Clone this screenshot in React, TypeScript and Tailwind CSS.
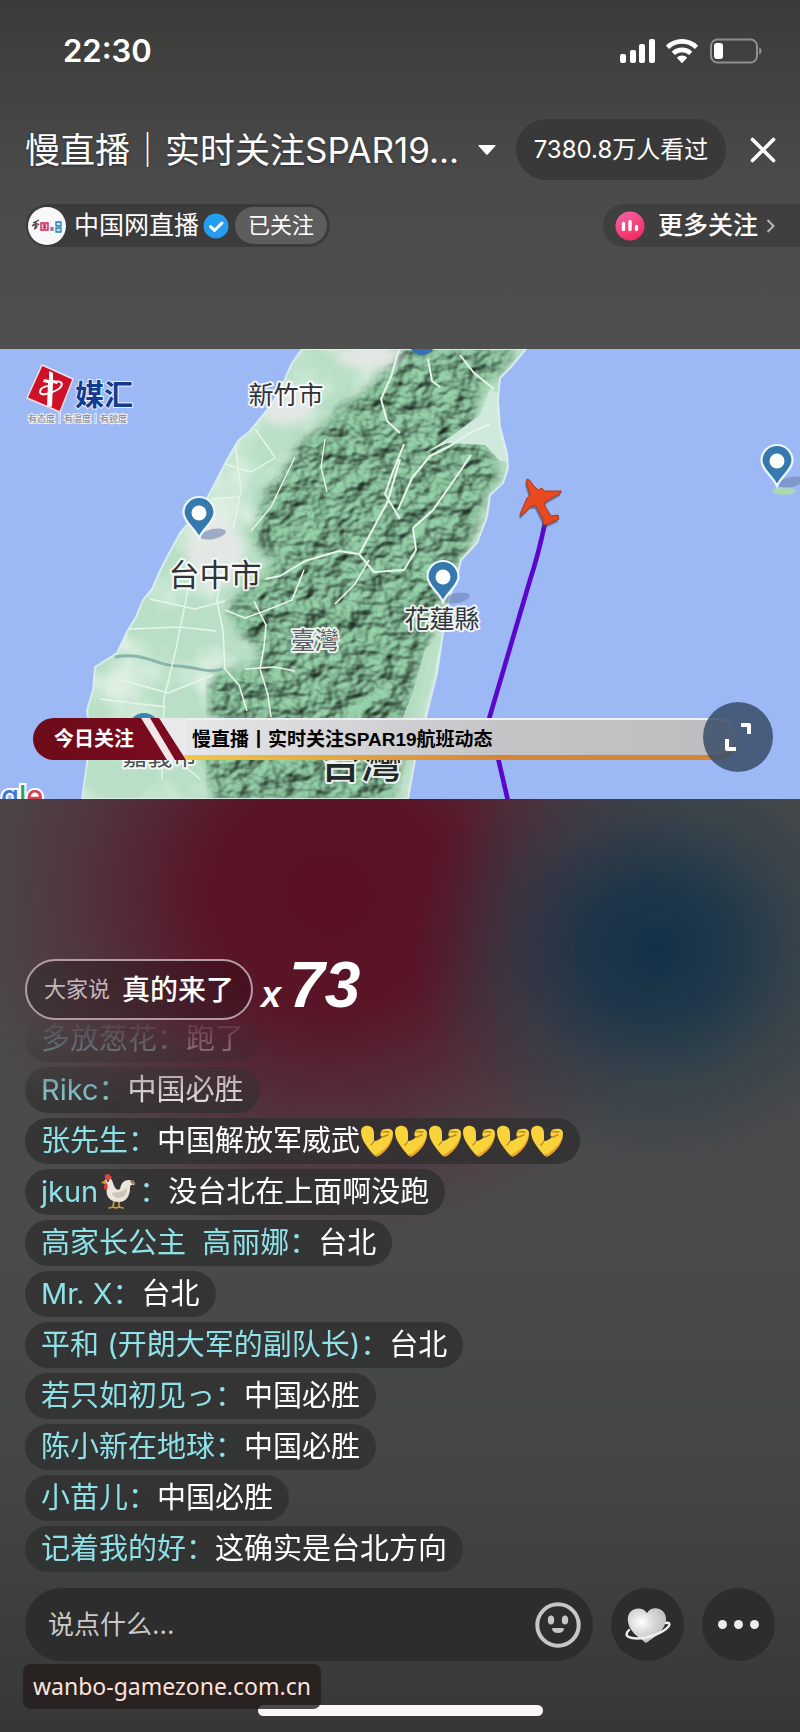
import React from "react";

type Comment = { name: string; text: string; bird?: boolean; arms?: number };

const comments: Comment[] = [
  { name: "多放葱花", text: "跑了" },
  { name: "Rikc", text: "中国必胜" },
  { name: "张先生", text: "中国解放军威武", arms: 6 },
  { name: "jkun", text: "没台北在上面啊没跑", bird: true },
  { name: "高家长公主  高丽娜", text: "台北" },
  { name: "Mr. X", text: "台北" },
  { name: "平和 (开朗大军的副队长)", text: "台北" },
  { name: "若只如初见っ", text: "中国必胜" },
  { name: "陈小新在地球", text: "中国必胜" },
  { name: "小苗儿", text: "中国必胜" },
  { name: "记着我的好", text: "这确实是台北方向" },
];

function StatusIcons() {
  return (
    <svg width="144" height="26" viewBox="0 0 144 26" aria-hidden="true">
      <g fill="#fff">
        <rect x="1" y="16" width="6" height="9" rx="2" />
        <rect x="11" y="12" width="6" height="13" rx="2" />
        <rect x="20" y="6" width="6" height="19" rx="2" />
        <rect x="30" y="1" width="6" height="24" rx="2" />
      </g>
      <g fill="none" stroke="#fff" strokeWidth="4.6">
        <path d="M48.5 9.3a20.8 20.8 0 0 1 29 0" />
        <path d="M54.3 15.4a12.6 12.6 0 0 1 17.4 0" />
      </g>
      <path d="M57.8 19.7a7.4 7.4 0 0 1 10.4 0L63 25.2z" fill="#fff" />
      <rect x="92" y="1.5" width="46" height="23" rx="6.5" fill="none" stroke="#8f8f8f" strokeWidth="2" />
      <rect x="95" y="5" width="9" height="16" rx="3" fill="#fff" />
      <path d="M140.2 9.5c1.6.6 2.4 2 2.4 3.5s-.8 2.900-2.400 3.500z" fill="#8f8f8f" />
    </svg>
  );
}

function Pin({ x, y }: { x: number; y: number }) {
  return (
    <g transform={`translate(${x} ${y})`}>
      <ellipse cx="14" cy="-4" rx="13" ry="5" fill="#6d83ad" opacity=".6" transform="rotate(-12 14 -4)" />
      <path
        d="M0 0C-4-10-15.500-16-15.500-25.500a15.500 15.500 0 0 1 31 0C15.500-16 4-10 0 0z"
        fill="#3579ae"
        stroke="#eef6fb"
        strokeWidth="2.200"
      />
      <circle cy="-25" r="7.500" fill="#fff" />
    </g>
  );
}

const land =
  "M302 0L292 14L285 30L276 48L267 61L250 82L238 92L227 111L213 138L205 153L190 172L180 184L167 208L160 222L152 240L143 251L136 268L128 281L117 304L95 318L93 341L87 361L90 390L87 414L82 450H408L415 411L427 364L437 324L443 284L449 250L458 224L461 211L477 194L487 168L490 146L503 134L508 119L507 104L500 78L498 51L500 29L511 18L526 0Z";
const hills =
  "M398 0L388 22L372 38L340 62L318 84L300 96L284 128L268 140L262 168L252 186L276 214L262 232L246 238L230 262L244 286L262 300L258 318L214 328L208 352L222 380L206 408L214 450H392L402 400L414 352L424 300L440 262L455 215L470 192L484 148L496 130L492 92L470 74L480 42L494 26L516 0Z";

function FlightMap() {
  return (
    <svg
      className="block h-full w-full"
      viewBox="0 0 800 450"
      preserveAspectRatio="xMidYMid slice"
      role="img"
      aria-label="SPAR19 航班地图"
      fontFamily="'Noto Sans CJK TC', 'Noto Sans CJK SC', sans-serif"
    >
      <defs>
        <filter id="relief" x="0" y="0" width="100%" height="100%" colorInterpolationFilters="sRGB">
          <feTurbulence type="fractalNoise" baseFrequency="0.045 0.055" numOctaves="3" seed="8" result="n" />
          <feDiffuseLighting in="n" surfaceScale="7" diffuseConstant="1.15" lightingColor="#86bb97" result="l">
            <feDistantLight azimuth="225" elevation="55" />
          </feDiffuseLighting>
          <feGaussianBlur in="SourceGraphic" stdDeviation="6" result="edge" />
          <feComposite in="l" in2="edge" operator="in" />
        </filter>
        <filter id="plains" x="0" y="0" width="100%" height="100%">
          <feTurbulence type="fractalNoise" baseFrequency="0.02" numOctaves="3" seed="3" result="n" />
          <feColorMatrix in="n" type="matrix" values="0 0 0 0 .93  0 0 0 0 .95  0 0 0 0 .92  3 0 0 0 -1.300" result="w" />
          <feComposite in="w" in2="SourceGraphic" operator="in" />
        </filter>
        <filter id="soft">
          <feGaussianBlur stdDeviation="5" />
        </filter>
        <clipPath id="landClip">
          <path d={land} />
        </clipPath>
      </defs>
      <rect width="800" height="450" fill="#9cb8f5" />
      <path d={land} fill="#b9e0c6" />
      <path d={land} filter="url(#plains)" opacity=".6" />
      <g clipPath="url(#landClip)">
        <path d={hills} fill="#7cb28d" filter="url(#soft)" />
        <path d={hills} filter="url(#relief)" opacity=".9" />
        <path d="M500 45L490 40L480 66L450 88L425 104L448 94L485 96L500 112L508 112Z" fill="#cfe9dc" />
        <path d="M443 284L425 300L412 345L398 380L405 400L430 340Z" fill="#b9e0c6" opacity=".9" />
        <ellipse cx="215" cy="205" rx="28" ry="34" fill="#ece9ec" opacity=".8" filter="url(#soft)" />
        <ellipse cx="284" cy="55" rx="28" ry="22" fill="#ece9ec" opacity=".8" filter="url(#soft)" />
        <ellipse cx="370" cy="8" rx="34" ry="12" fill="#ece9ec" opacity=".8" filter="url(#soft)" />
        <path d="M115 308c30-5 40 8 62 9s30 8 46 3" fill="none" stroke="#88b4ab" strokeWidth="3" />
        <g fill="none" stroke="#e8f5ea" strokeWidth="2" strokeLinejoin="round">
          <path d="M399 0l-8 28-10 22 6 22 13 12M400 170l-15-25 7-20 12-30M400 110l-12 42-28 52M265 230l15-3 25-15 34-10 20 3 15 18 30-2 12-20-3-22 20-18 28-40 10-15" />
          <path d="M428 10l4 22 8 6M460 6l14 18 20 16M490 75l-22 10-18 12-20 10-18 22-14 32" />
          <path d="M222 222l-5 30 6 30 2 38 14 16 8 26M225 261l20 8 22-8 25-10 12-30M254 252l12 24-2 22-4 22 8 26 3 22M335 255l20-20 14-24M245 320l30-2 20 4" strokeWidth="1.600" />
          <path d="M190 230l-14 70-12 50-2 80M150 250l45 10 30-8M130 280l50-2 36 4M118 330l50 14 45-18M100 350l66 8M235 92l6 50-8 38M295 108l-24 50-20 24M325 90l-4 28 6 25M225 115l26 8 24-14M212 150l28-2M90 380l60-10 50 12M200 430l-30-25-40 5M255 80l20 28" strokeWidth="1.400" />
        </g>
      </g>
      <path d={land} fill="none" stroke="#e4f3f3" strokeWidth="2" opacity=".8" />
      <circle cx="422" cy="-7" r="13" fill="#3471b4" />
      <circle cx="144" cy="380" r="16" fill="#3588ac" />

      <g fill="#2e3438" stroke="#fff" strokeOpacity=".85" strokeWidth="4" paintOrder="stroke" strokeLinejoin="round" textAnchor="middle">
        <text x="286" y="55" fontSize="25">新竹市</text>
        <text x="215" y="237" fontSize="31">台中市</text>
        <text x="315" y="300" fontSize="24" fill="#5a5f68">臺灣</text>
        <text x="442" y="279" fontSize="25">花蓮縣</text>
        <text x="160" y="416" fontSize="25" fill="#4a5052">嘉義市</text>
        <text x="361" y="429" fontSize="41" fontWeight="500" fill="#22282a">台灣</text>
      </g>
      <text x="1" y="457" fontSize="29" fontFamily="Inter, sans-serif" fontWeight="500" stroke="#fff" strokeWidth="4" paintOrder="stroke">
        <tspan fill="#4077d8">g</tspan>
        <tspan fill="#3a9b61">l</tspan>
        <tspan fill="#d54252">e</tspan>
      </text>

      <path d="M545 174Q538 207 530 231Q508 306 489 370L508 452" fill="none" stroke="#5a06cc" strokeWidth="4.600" />
      <Pin x={199} y={189} />
      <Pin x={443} y={253} />
      <ellipse cx="784" cy="142" rx="12" ry="4" fill="#a9d8b8" />
      <Pin x={777} y={137} />

      <g id="plane">
        <path
          d="M527 130Q530 130 533 136L538 141L542 139L544 142L561 142L561 144L545 153L545 157L551 167L558 166L559 170L546 176L543 175L543 171L536 157L531 157L521 167L520 165L527 149L530 146L526 133Z"
          fill="#3c466a"
          opacity=".55"
          transform="translate(-1 3)"
        />
        <path
          d="M527 130Q530 130 533 136L538 141L542 139L544 142L561 142L561 144L545 153L545 157L551 167L558 166L559 170L546 176L543 175L543 171L536 157L531 157L521 167L520 165L527 149L530 146L526 133Z"
          fill="#e9491f"
          stroke="#a53a23"
          strokeWidth="1"
        />
      </g>

      <path d="M42 16L73 30L60 63L27 49Z" fill="#cf1127" stroke="#f5dfe6" strokeWidth="1.500" />
      <path d="M49 22l4 2v7l5 1-1 3-4-1-1 24-5-1 1-23-5-1 1-3 5 1z" fill="#fff" />
      <path d="M56 33c7-2 8 4 1 8s-17 6-17 2 5-6 9-6" fill="none" stroke="#fff" strokeWidth="2" />
      <g stroke="#fff" strokeWidth="2" strokeOpacity=".8" paintOrder="stroke">
        <text x="75" y="57" fontSize="29" fontWeight="700" fill="#133b92" fontFamily="'Noto Sans CJK SC', sans-serif">媒汇</text>
        <text x="28" y="73" fontSize="9" fill="#7d7c80" fontFamily="'Noto Sans CJK SC', sans-serif">有态度｜有温度｜有锐度</text>
      </g>
    </svg>
  );
}

function Banner() {
  return (
    <div className="absolute bottom-[39px] left-[33px] right-[62px] flex h-[42px] items-stretch">
      <div className="flex w-[152px] items-center rounded-l-full bg-linear-to-r from-[#6d0b18] to-[#7c0b20] pl-[21px] text-[20px] font-bold text-white [clip-path:polygon(0_0,81%_0,100%_100%,0_100%)]">
        今日关注
      </div>
      <div className="-ml-[30px] flex flex-1 items-center rounded-r-full border-t-2 border-[#eef0f6] bg-linear-to-r from-[#eaeaec] via-[#c4c4c6] via-60% to-[#bdbdbf] pl-[37px] text-[19px] font-bold text-black shadow-[inset_0_-5px_0_#d88432] [clip-path:polygon(0_0,100%_0,100%_100%,30px_100%)]">
        <span className="whitespace-nowrap font-[Liberation_Sans,Noto_Sans_CJK_SC,sans-serif]">慢直播丨实时关注SPAR19航班动态</span>
      </div>
      <div className="absolute bottom-0 left-[150px] right-1/3 h-[5px] bg-linear-to-r from-[#f0c848] to-[#d88432]" />
      <svg className="absolute left-[104px] top-0" width="50" height="42" viewBox="0 0 50 42" aria-hidden="true">
        <path d="M22 0H50V42H48z" fill="#e9e9ec" />
        <path d="M13 0H22L49 42H38z" fill="#7c0b20" />
        <path d="M4 0H13L38 42H30z" fill="#f3e6e8" />
        <path d="M46 37H50V42H49z" fill="#f0c848" />
      </svg>
    </div>
  );
}

function Rooster() {
  return (
    <svg className="mx-[3px] shrink-0" width="35" height="36" viewBox="0 0 35 36" aria-hidden="true">
      <path d="M13 27l-1 6-4 1M18 27v6l-4 1M18 33l4 1M12 33l3 1" stroke="#c99a3b" strokeWidth="1.700" fill="none" strokeLinecap="round" />
      <path d="M4 6c3-4 7-2 8 3 2 6 4 8 7 6 1-6 4-9 9-9 4 0 6 2 5 5-3-1-4 1-4 3 0 8-4 14-11 14C9 28 4 22 6 14z" fill="#ebe5dc" />
      <path d="M18 18c3 0 6-2 8-5 0 7-2 10-7 11-4 0-7-2-8-5z" fill="#cec5b8" />
      <path d="M29 6c4 0 6 2 5 5l-4-2z" fill="#8a7d72" />
      <path d="M4 4c-1-4 1-4 2-3 1-2 3-1 3 1 2 0 2 2 1 3L6 7z" fill="#e04747" />
      <path d="M4 9c-2 4-1 7 1 7s2-4 1-7z" fill="#d93a3f" />
      <path d="M4 6L0 9l5 1z" fill="#e2a33a" />
      <circle cx="7" cy="7" r="1" fill="#2b2320" />
    </svg>
  );
}

function Arm() {
  return (
    <svg className="shrink-0" width="34" height="34" viewBox="0 0 34 34" aria-hidden="true">
      <path
        d="M1 8C1 3 5 1 9 2c4 1 5 4 5 8v7c3 0 6-2 8-4-2-1-2-3-1-5 0-2 2-3 5-3 4-1 7 1 7 4 0 9-6 17-13 22-2 2-5 2-7-1C8 24 1 16 1 8z"
        fill="#f9d33c"
      />
      <path d="M33 11c-1 9-7 16-13 20-2 2-5 2-7-1 3 1 5 0 7-2 6-4 11-10 13-17z" fill="#e8a02c" />
      <path d="M14 17c-1 2-2 3-3 4M22 8c2-1 4 0 7 0M22 13c3 0 4-2 6-2" fill="none" stroke="#c3841a" strokeWidth="1.300" strokeLinecap="round" />
    </svg>
  );
}

export default function App() {
  return (
    <div className="relative flex min-h-screen flex-col bg-[#434343] font-[Inter,Noto_Sans_CJK_SC,sans-serif] text-white">
      <header className="bg-linear-to-b from-[#3b3b3a] via-[#4a4a4a] via-50% to-[#4f4f4f] pb-[102px] pt-7">
        <div className="flex h-[46px] items-center justify-between pl-[63px] pr-[37px]">
          <time className="text-[31px] font-semibold">22:30</time>
          <StatusIcons />
        </div>

        <div className="mt-[45px] flex h-[61px] items-center pl-[25px] pr-6">
          <button type="button" className="flex min-w-0 items-center gap-[18px] text-[35px] leading-[48px]">
            <span className="whitespace-nowrap [text-shadow:0_1px_3px_rgba(0,0,0,0.4)]">慢直播｜实时关注SPAR19...</span>
            <svg className="shrink-0" width="20" height="12" viewBox="0 0 20 12" aria-hidden="true">
              <path d="M2 1h16q1 0 .4 1L11 10.300q-1 1-2 0L1.600 2Q1 1 2 1z" fill="#fff" />
            </svg>
          </button>
          <div className="ml-auto flex h-full w-[210px] shrink-0 items-center justify-center rounded-full bg-[#383938] text-[24px]">
            7380.8万人看过
          </div>
          <button type="button" aria-label="关闭" className="ml-6 shrink-0">
            <svg width="26" height="26" viewBox="0 0 26 26" aria-hidden="true">
              <path d="M2.500 2.500l21 21M23.500 2.500l-21 21" stroke="#fff" strokeWidth="3.600" strokeLinecap="round" />
            </svg>
          </button>
        </div>

        <div className="mt-6 flex h-[43px] items-center justify-between pl-[26px]">
          <div className="flex h-full items-center rounded-full bg-[#3b3b3b] pl-[2px] pr-[3px]">
            <svg width="38" height="38" viewBox="0 0 38 38" aria-hidden="true">
              <circle cx="19" cy="19" r="19" fill="#f8f7f9" />
              <path d="M5 16l6-3M4 19c2-2 6-3 7-1M8 14l-1 8M9 18c0 3-2 4-3 4" stroke="#4b3d44" strokeWidth="1.300" fill="none" />
              <path d="M13 16h7v7h-7zM14.500 18h4M16.500 18v4M14.500 20.500h4" stroke="#d12052" strokeWidth="1.400" fill="none" />
              <path d="M22 21h4M22 23h4M24 20v4" stroke="#665b72" strokeWidth="1" />
              <path d="M28 15h5v4h-5zM28 21h5v4h-5z" fill="#c5e2ef" stroke="#2583ae" strokeWidth="1.300" />
            </svg>
            <span className="ml-2 text-[25px]">中国网直播</span>
            <svg className="ml-1" width="26" height="26" viewBox="0 0 26 26" aria-hidden="true">
              <circle cx="13" cy="13" r="12.500" fill="#239df0" />
              <path d="M7.500 13.500l4 4 7.500-7.500" fill="none" stroke="#fff" strokeWidth="3" strokeLinecap="round" strokeLinejoin="round" />
            </svg>
            <button type="button" className="ml-[6px] h-[37px] w-[92px] rounded-full bg-[#5d5d5d] text-[22px]">
              已关注
            </button>
          </div>
          <a href="#more" className="flex h-full items-center rounded-l-full bg-[#3f3f3f] pl-3 pr-6 text-[25px] font-medium">
            <svg width="30" height="30" viewBox="0 0 30 30" aria-hidden="true">
              <defs>
                <linearGradient id="pink" x1="0" y1="0" x2=".5" y2="1">
                  <stop stopColor="#f568ad" />
                  <stop offset="1" stopColor="#f42d63" />
                </linearGradient>
              </defs>
              <circle cx="15" cy="15" r="14.500" fill="url(#pink)" />
              <path d="M8.500 12.500v6M15 10.500v8M21.500 15.500v3" stroke="#fff" strokeWidth="3.400" strokeLinecap="round" />
            </svg>
            <span className="ml-[13px]">更多关注</span>
            <svg className="ml-2" width="10" height="16" viewBox="0 0 10 16" aria-hidden="true">
              <path d="M1.500 2l6 6-6 6" fill="none" stroke="#b5b5b5" strokeWidth="2" />
            </svg>
          </a>
        </div>
      </header>

      <section className="relative aspect-video w-full overflow-hidden bg-[#9cb8f5]">
        <FlightMap />
        <Banner />
        <button
          type="button"
          aria-label="全屏"
          className="absolute bottom-[27px] right-[27px] flex size-[70px] items-center justify-center rounded-full bg-[#394c68]/85"
        >
          <svg width="28" height="30" viewBox="0 0 28 30" aria-hidden="true">
            <path d="M17 3h8v9M3 17v10h9" fill="none" stroke="#fff" strokeWidth="4" strokeLinejoin="round" />
          </svg>
        </button>
      </section>

      <main className="flex flex-1 flex-col bg-[radial-gradient(ellipse_240px_220px_at_655px_150px,#143148_0%,#193549e0_30%,#2a3e4b90_62%,transparent_100%),radial-gradient(ellipse_370px_350px_at_330px_95px,#5c0f22_0%,#5a1326f0_35%,#55283690_70%,transparent_100%),linear-gradient(#4a4a4a_0%,#4b4b4b_45%,#434444_75%,#363736_100%)] px-[25px] pb-4 pt-40">
        <div className="flex h-[61px] items-center">
          <div className="flex h-full w-[228px] shrink-0 items-center justify-center gap-3 rounded-full border-2 border-[#b39da3] bg-black/20">
            <span className="text-[22px] text-[#c4b8bb]">大家说</span>
            <span className="text-[28px] font-medium">真的来了</span>
          </div>
          <div className="ml-2 flex items-baseline gap-2 font-[Liberation_Sans,sans-serif] font-bold italic leading-[60px]">
            <span className="text-[36px]">x</span>
            <span className="text-[64px]">73</span>
          </div>
        </div>

        <ul className="-mt-1 flex flex-col items-start gap-[5px] text-[29px] [mask-image:linear-gradient(transparent_0,rgba(0,0,0,0.25)_28px,rgba(0,0,0,0.75)_76px,black_104px)]">
          {comments.map((c) => (
            <li key={c.name} className="flex h-[46px] items-center whitespace-pre rounded-full bg-[#303030]/80 px-4">
              <span className="flex items-center text-[#8fe1e8]">
                {c.name}
                {c.bird && <Rooster />}：
              </span>
              <span>{c.text}</span>
              {Array.from({ length: c.arms ?? 0 }, (_, i) => (
                <Arm key={i} />
              ))}
            </li>
          ))}
        </ul>

        <div className="mt-4 flex h-[73px] items-center gap-[18px]">
          <div className="flex h-full min-w-0 flex-1 items-center rounded-full bg-[#2d2d2d] pl-[23px] pr-3">
            <input
              type="text"
              aria-label="说点什么"
              placeholder="说点什么..."
              className="min-w-0 flex-1 bg-transparent text-[26px] outline-none placeholder:text-[#c9c9c9]"
            />
            <button type="button" aria-label="表情">
              <svg width="46" height="46" viewBox="0 0 46 46" aria-hidden="true">
                <circle cx="23" cy="23" r="20.700" fill="none" stroke="#c6c6c6" strokeWidth="4" />
                <ellipse cx="16" cy="18" rx="3.200" ry="4.500" fill="#c6c6c6" />
                <ellipse cx="30" cy="18" rx="3.200" ry="4.500" fill="#c6c6c6" />
                <path d="M18.500 26h9q2 0 1.500 1.500-1.500 3.500-6 3.500t-6-3.500q-.500-1.500 1.500-1.500z" fill="#c6c6c6" />
              </svg>
            </button>
          </div>
          <button type="button" aria-label="喜欢" className="flex size-[73px] shrink-0 items-center justify-center rounded-full bg-[#2d2d2d]">
            <svg width="46" height="38" viewBox="0 0 46 38" aria-hidden="true">
              <defs>
                <radialGradient id="pearl" cx=".35" cy=".4" r=".65">
                  <stop stopColor="#fff" />
                  <stop offset=".5" stopColor="#d9d9d9" />
                  <stop offset="1" stopColor="#bfbfbf" />
                </radialGradient>
              </defs>
              <path d="M21 37C17 33 4 27 3 15 1 3 16-2 22 7c6-9 20-4 19 7-1 12-16 20-20 23z" fill="url(#pearl)" />
              <path d="M4 24c-4 4-3 7 3 8 11 2 26-3 34-9 5-4 4-7 0-6" fill="none" stroke="#eee" strokeWidth="2.400" strokeLinecap="round" />
            </svg>
          </button>
          <button type="button" aria-label="更多" className="flex size-[73px] shrink-0 items-center justify-center gap-[7px] rounded-full bg-[#2d2d2d]">
            <span className="size-[9px] rounded-full bg-[#ececec]" />
            <span className="size-[9px] rounded-full bg-[#ececec]" />
            <span className="size-[9px] rounded-full bg-[#ececec]" />
          </button>
        </div>

        <div className="mt-11 h-[11px] w-[285px] self-center rounded-full bg-[#fdf6fb]" />
      </main>

      <div className="absolute bottom-[23px] left-[23px] flex h-[45px] items-center rounded-lg bg-[#241d1a]/80 px-[10px] font-[Noto_Sans,sans-serif] text-[23px] text-[#fde3dc]">
        wanbo-gamezone.com.cn
      </div>
    </div>
  );
}
